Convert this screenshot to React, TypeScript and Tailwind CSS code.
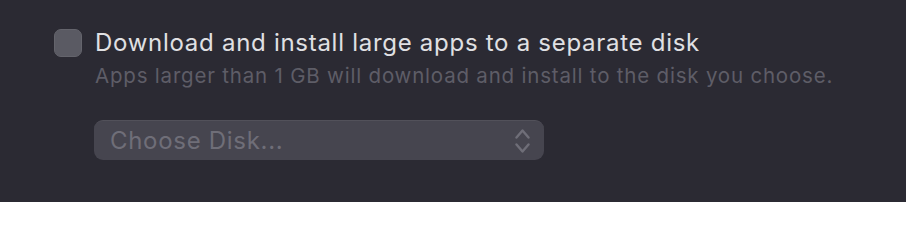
export default function App() {
  return (
    <div className="w-[906px] h-[202px] bg-[#2b2a33] pl-[54px] pt-[28px] font-['Inter',sans-serif] antialiased">
      <div className="flex items-start gap-[13px]">
        <div className="mt-[1px] w-[28px] h-[28px] shrink-0 rounded-[7px] bg-[#5a5a63] border border-[#64646c]" />
        <div className="flex flex-col">
          <div className="text-[24px] leading-[30px] tracking-[0.72px] text-[#e0e0e3]">
            Download and install large apps to a separate disk
          </div>
          <div className="mt-[5px] text-[20.5px] leading-[26px] tracking-[0.8px] text-[#5e5d67]">
            Apps larger than 1 GB will download and install to the disk you choose.
          </div>
          <div className="mt-[31px] w-[450px] h-[40px] -ml-px flex items-center justify-between rounded-[9px] bg-[#46454f] border-t border-[#52515a] pl-[16px] pr-[14px]">
            <span className="text-[24px] tracking-[0.7px] text-[#6f6e78]">Choose Disk...</span>
            <svg width="15" height="26" viewBox="0 0 15 26" fill="none" stroke="#6f6e78" strokeWidth="2.4" strokeLinecap="round" strokeLinejoin="round">
              <path d="M1.5 9.5 L7.5 2.5 L13.5 9.5" />
              <path d="M1.5 16.5 L7.5 23.5 L13.5 16.5" />
            </svg>
          </div>
        </div>
      </div>
    </div>
  );
}
